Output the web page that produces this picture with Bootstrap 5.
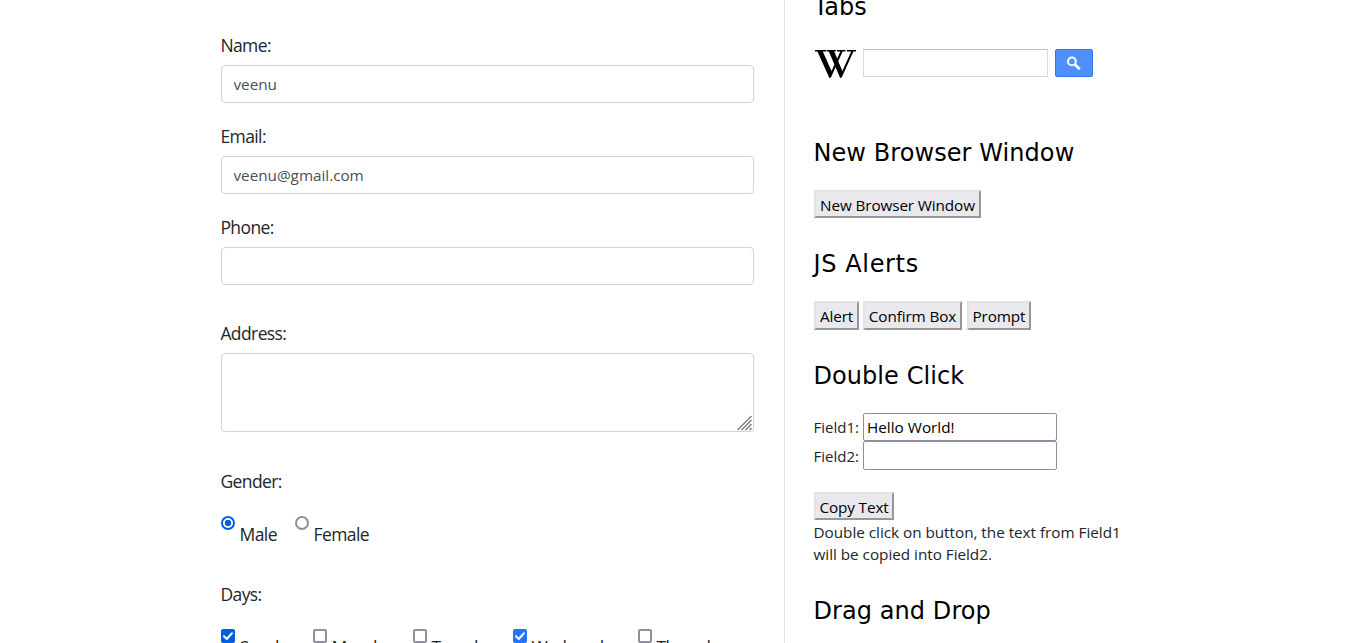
<!DOCTYPE html>
<html lang="en">
<head>
<meta charset="utf-8">
<meta name="viewport" content="width=device-width, initial-scale=1">
<title>Automation Practice</title>
<link href="https://cdn.jsdelivr.net/npm/bootstrap@5.3.0/dist/css/bootstrap.min.css" rel="stylesheet">
<style>
body{font-family:"Open Sans","Noto Sans",sans-serif;color:#212529;height:643px;overflow:hidden;font-size:15px;line-height:22px}
.page-columns{margin-left:221px}
.form-side{width:564px;padding:33px 30px 0 0;height:643px}
.tools-side{width:340px;padding-left:29px;margin-top:-8px}
.form-side .field-label{display:block;font-size:17.5px;line-height:24px;margin:0 0 8px -.6px;letter-spacing:-.6px}
.form-side .form-control{font-size:15.3px;height:38px;padding:7px 12px 7px 11.5px;border:1px solid #ced4da;border-radius:4px;color:#495057;line-height:22px;letter-spacing:-.03px}
.form-side textarea.form-control{height:79px;resize:none}
.group-gap{margin-bottom:21px}
.gap-phone{margin-bottom:36px}
.gap-address{margin-bottom:37px}
.form-side .label-options{margin-bottom:23px}
.gender-row{height:66px}
.grip{position:absolute;right:1px;bottom:1px;pointer-events:none}
.choice{display:flex;font-size:17.5px;letter-spacing:-.58px;line-height:24px;white-space:nowrap}
.choice input{appearance:none;flex:none;width:14px;height:14px;margin:0 4.5px 0 0;border:2px solid #8f8f9d;background:#fff}
.choice span{padding-top:6px}
.choice input[type=radio]{border-radius:50%}
.choice input[type=radio]:checked{border-color:#0060df;background:radial-gradient(circle,#0060df 0 3px,#fff 3.6px)}
.choice input[type=checkbox]{border-radius:2px}
.choice input[type=checkbox]:checked{border:0;background:#0060df url("data:image/svg+xml,%3Csvg xmlns='http://www.w3.org/2000/svg' viewBox='0 0 14 14'%3E%3Cpath d='M3 7.2 5.8 10 11 4.2' fill='none' stroke='white' stroke-width='2' stroke-linecap='round' stroke-linejoin='round'/%3E%3C/svg%3E")}
.choice input.hovered:checked{background-color:#2374ff}
.tools-side h2{font:400 24px/30px "DejaVu Sans",sans-serif;color:#000;margin:0 0 0 -.6px;letter-spacing:.08px}
.tools-side h2.wide-heading{letter-spacing:.65px}
.raised{display:block;height:28px;padding:2px 0 0;border:2px solid;border-color:#e3e3e3 #979797 #979797 #e3e3e3;background:#e9e9ed;color:#000;font-size:15.3px;letter-spacing:-.12px;line-height:22px;white-space:nowrap}
.raised.tall{height:29px;padding:1px 0 1px}
.plain-input{width:194px;height:28px;border:1px solid #8f8f9d;border-radius:2px;padding:0 3px 1px;color:#000;font-size:15.3px}
.plain-input.tall{height:29px}
.field-name{width:49.5px;margin-left:-.5px}
.wiki-input{width:185px;height:28px;border:1px solid #d9d9d9;border-top-color:#c0c0c0}
.wiki-btn{width:38px;height:28px;background:#4d90fe;border:1px solid #2f78ec;border-radius:2px;padding:0 1px 0 0;margin-left:7px}
.wiki-logo{margin:0 6px -2px 0}
.note{font-size:15.3px;letter-spacing:-.03px;margin:1px 0 31px -.5px}
</style>
</head>
<body class="bg-white">
<div class="d-flex page-columns">
  <form class="form-side border-end">
    <div class="group-gap"><label class="field-label" for="name">Name:</label><input id="name" class="form-control" value="veenu"></div>
    <div class="group-gap"><label class="field-label" for="email">Email:</label><input id="email" class="form-control" value="veenu@gmail.com"></div>
    <div class="gap-phone"><label class="field-label" for="phone">Phone:</label><input id="phone" class="form-control"></div>
    <div class="position-relative gap-address"><label class="field-label" for="addr">Address:</label><textarea id="addr" class="form-control d-block"></textarea>
      <svg class="grip" width="16" height="16" viewBox="0 0 16 16" fill="none" stroke="#777" stroke-width="1.3"><path d="M.5 15 14.5 1M4.5 15l10-10M8.5 15l6-6M12.5 15l2-2"/></svg>
    </div>
    <div class="field-label label-options">Gender:</div>
    <div class="d-flex gender-row">
      <label class="choice" style="width:74px"><input type="radio" name="g" checked><span>Male</span></label>
      <label class="choice"><input type="radio" name="g"><span>Female</span></label>
    </div>
    <div class="field-label label-options">Days:</div>
    <div class="d-flex">
      <label class="choice" style="width:92px"><input type="checkbox" checked><span>Sunday</span></label>
      <label class="choice" style="width:100px"><input type="checkbox"><span>Monday</span></label>
      <label class="choice" style="width:100px"><input type="checkbox"><span>Tuesday</span></label>
      <label class="choice" style="width:125px"><input type="checkbox" class="hovered" checked><span>Wednesday</span></label>
      <label class="choice"><input type="checkbox"><span>Thursday</span></label>
    </div>
  </form>
  <div class="tools-side">
    <h2>Tabs</h2>
    <div class="d-flex" style="margin:27px 0 61px">
      <svg class="wiki-logo" width="43" height="30" viewBox="0 0 43 30" aria-label="Wikipedia">
        <path d="M3.2 2H8.6L18.2 23.6 16.2 29H15.4ZM14.6 2H20L29 23.6 27 29H26.2Z"/>
        <g fill="none" stroke="#000">
          <path d="M16 28 27.7 2M26.8 28 38.5 2" stroke-width="2"/>
          <path d="M1 1.8H12M12.6 1.8H21.8M23 1.8H31.5M33 1.8H42" stroke-width="1.6"/>
        </g>
      </svg>
      <input class="wiki-input" aria-label="Search">
      <button class="wiki-btn d-flex align-items-center justify-content-center" aria-label="Search">
        <svg width="14" height="14" viewBox="0 0 14 14" fill="none" stroke="#fff"><circle cx="4.9" cy="5.4" r="3.9" stroke-width="2"/><path d="m7.9 8.4 4.8 4.8" stroke-width="2.8"/></svg>
      </button>
    </div>
    <h2>New Browser Window</h2>
    <button class="raised" style="width:167px;margin:22px 0 31px">New Browser Window</button>
    <h2 class="wide-heading">JS Alerts</h2>
    <div class="d-flex" style="margin:22px 0 31px">
      <button class="raised tall" style="width:45px;margin-right:4px">Alert</button>
      <button class="raised tall" style="width:99px;margin-right:5px">Confirm Box</button>
      <button class="raised tall" style="width:64px">Prompt</button>
    </div>
    <h2>Double Click</h2>
    <div class="d-flex align-items-center" style="margin-top:22px"><span class="field-name">Field1:</span><input class="plain-input" value="Hello World!"></div>
    <div class="d-flex align-items-center" style="margin-bottom:22px"><span class="field-name">Field2:</span><input class="plain-input tall"></div>
    <button class="raised" style="width:80px">Copy Text</button>
    <div class="text-nowrap note">Double click on button, the text from Field1<br>will be copied into Field2.</div>
    <h2>Drag and Drop</h2>
  </div>
</div>
<script src="https://cdn.jsdelivr.net/npm/bootstrap@5.3.0/dist/js/bootstrap.bundle.min.js"></script>
</body>
</html>
